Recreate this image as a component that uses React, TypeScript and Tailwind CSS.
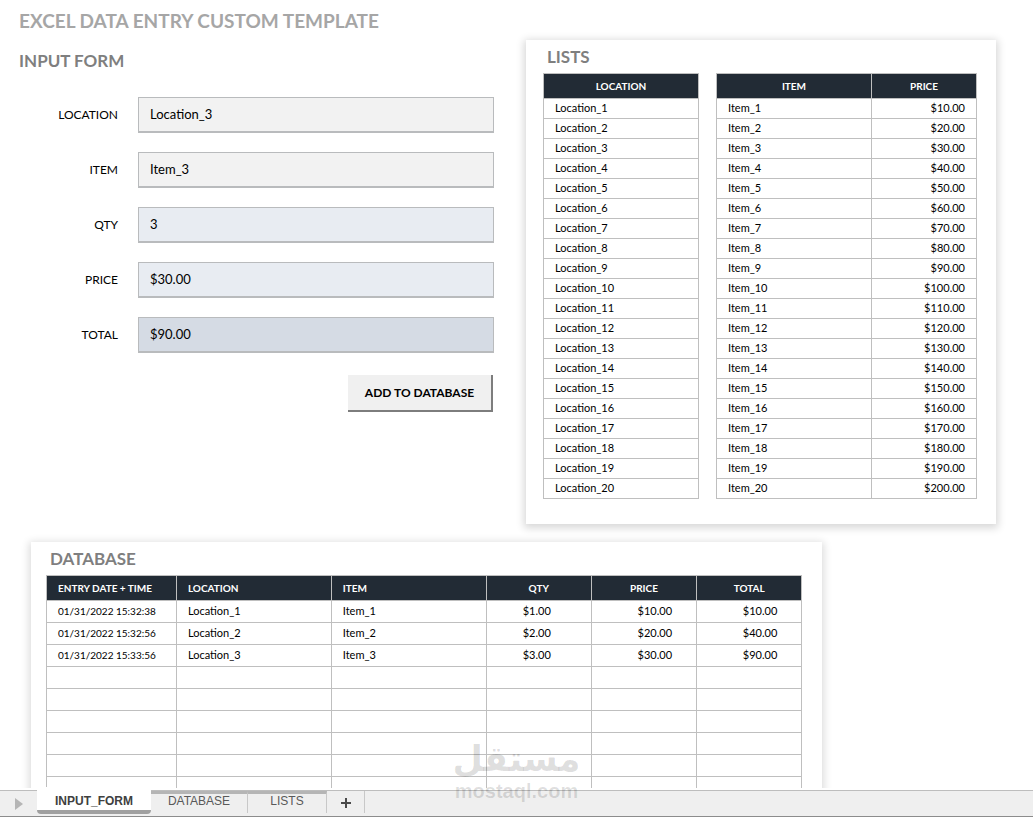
import { useState } from "react";
import clsx from "clsx";

const LIST_SIZE = 20;
const EMPTY_ROWS = 8;

const formatPrice = (value: number) => `$${value.toFixed(2)}`;

const locations = Array.from(
  { length: LIST_SIZE },
  (_, i) => `Location_${i + 1}`
);

const items = Array.from({ length: LIST_SIZE }, (_, i) => ({
  name: `Item_${i + 1}`,
  price: (i + 1) * 10,
}));

const initialEntries = [
  { date: "01/31/2022 15:32:38", location: "Location_1", item: "Item_1", qty: 1, price: 10 },
  { date: "01/31/2022 15:32:56", location: "Location_2", item: "Item_2", qty: 2, price: 20 },
  { date: "01/31/2022 15:33:56", location: "Location_3", item: "Item_3", qty: 3, price: 30 },
];

const sheets = ["INPUT_FORM", "DATABASE", "LISTS"];

interface FieldProps {
  id: string;
  label: string;
  value: string;
  className: string;
  onChange?: (value: string) => void;
}

function Field({ id, label, value, className, onChange }: FieldProps) {
  return (
    <div className="flex items-center gap-5">
      <label htmlFor={id} className="w-[99px] shrink-0 text-right text-[12px]">
        {label}
      </label>
      <input
        id={id}
        type="text"
        value={value}
        readOnly={!onChange}
        onChange={(event) => onChange?.(event.target.value)}
        className={clsx(
          "h-9 min-w-0 flex-1 border border-b-2 border-[#b9bbbd] px-[11px] pb-0.5 text-[13px] outline-none",
          className
        )}
      />
    </div>
  );
}

function InputForm() {
  const [location, setLocation] = useState("Location_3");
  const [item, setItem] = useState("Item_3");
  const [qty, setQty] = useState("3");

  const price = items.find((el) => el.name === item)?.price ?? 0;

  return (
    <form onSubmit={(event) => event.preventDefault()}>
      <h1 className="text-[19px] leading-[42px] font-bold whitespace-nowrap text-[#a6a6a6]">
        EXCEL DATA ENTRY CUSTOM TEMPLATE
      </h1>
      <h2 className="text-[17px] leading-[38px] font-bold text-[#7f7f7f]">
        INPUT FORM
      </h2>
      <div className="mt-[17px] flex flex-col gap-[19px]">
        <Field id="location" label="LOCATION" value={location} onChange={setLocation} className="bg-[#f2f2f2]" />
        <Field id="item" label="ITEM" value={item} onChange={setItem} className="bg-[#f2f2f2]" />
        <Field id="qty" label="QTY" value={qty} onChange={setQty} className="bg-[#e8ecf2]" />
        <Field id="price" label="PRICE" value={formatPrice(price)} className="bg-[#e8ecf2]" />
        <Field id="total" label="TOTAL" value={formatPrice(price * Number(qty))} className="bg-[#d5dbe4]" />
      </div>
      <div className="mt-[22px] flex justify-end pr-px">
        <button
          type="submit"
          className="h-[37px] w-[145px] border-r-2 border-b-2 border-[#7d7d7d] bg-[#f0f0f0] text-[12px] font-bold whitespace-nowrap"
        >
          ADD TO DATABASE
        </button>
      </div>
    </form>
  );
}

const headCell = "border border-[#bfbfbf] px-[11px] py-0";
const cell = "border border-[#bfbfbf] px-[11px] pt-0 pb-0.5";

function Lists() {
  return (
    <section className="bg-white pr-[19px] pb-[25px] pl-[17px] shadow-[0_2px_8px_2px_rgba(0,0,0,0.16)]">
      <h2 className="pl-1 text-[17px] leading-[33px] font-bold text-[#7f7f7f]">
        LISTS
      </h2>
      <div className="grid grid-cols-[156fr_261fr] gap-[17px] text-[11px] leading-[17px]">
        <table className="w-full table-fixed border-collapse">
          <thead>
            <tr className="h-[25px] bg-[#222b35] text-[10px] text-white">
              <th className={headCell}>LOCATION</th>
            </tr>
          </thead>
          <tbody>
            {locations.map((name) => (
              <tr key={name} className="h-5">
                <td className={cell}>{name}</td>
              </tr>
            ))}
          </tbody>
        </table>
        <table className="w-full table-fixed border-collapse">
          <colgroup>
            <col className="w-[155px]" />
            <col />
          </colgroup>
          <thead>
            <tr className="h-[25px] bg-[#222b35] text-[10px] text-white">
              <th className={headCell}>ITEM</th>
              <th className={headCell}>PRICE</th>
            </tr>
          </thead>
          <tbody>
            {items.map((el) => (
              <tr key={el.name} className="h-5">
                <td className={cell}>{el.name}</td>
                <td className={clsx(cell, "text-right")}>
                  {formatPrice(el.price)}
                </td>
              </tr>
            ))}
          </tbody>
        </table>
      </div>
    </section>
  );
}

function Database() {
  return (
    <section className="mt-[18px] ml-3 w-[81%] bg-white pr-5 pb-6 pl-[15px] shadow-[0_2px_8px_2px_rgba(0,0,0,0.14)]">
      <h2 className="pl-1 text-[17px] leading-[33px] font-bold text-[#7f7f7f]">
        DATABASE
      </h2>
      <table className="w-full table-fixed border-collapse text-[11px] leading-[19px]">
        <colgroup>
          <col className="w-[17.2%]" />
          <col className="w-[20.5%]" />
          <col className="w-[20.5%]" />
          <col />
          <col />
          <col />
        </colgroup>
        <thead>
          <tr className="h-[25px] bg-[#222b35] text-left text-[10px] whitespace-nowrap text-white">
            <th className={headCell}>ENTRY DATE + TIME</th>
            <th className={headCell}>LOCATION</th>
            <th className={headCell}>ITEM</th>
            <th className={clsx(headCell, "text-center")}>QTY</th>
            <th className={clsx(headCell, "text-center")}>PRICE</th>
            <th className={clsx(headCell, "text-center")}>TOTAL</th>
          </tr>
        </thead>
        <tbody>
          {initialEntries.map((entry) => (
            <tr key={entry.date} className="h-[22px] whitespace-nowrap">
              <td className={clsx(headCell, "text-[10px]")}>{entry.date}</td>
              <td className={cell}>{entry.location}</td>
              <td className={cell}>{entry.item}</td>
              <td className="border border-[#bfbfbf] pr-10 pb-0.5 text-right">
                {formatPrice(entry.qty)}
              </td>
              <td className="border border-[#bfbfbf] pr-6 pb-0.5 text-right">
                {formatPrice(entry.price)}
              </td>
              <td className="border border-[#bfbfbf] pr-6 pb-0.5 text-right">
                {formatPrice(entry.qty * entry.price)}
              </td>
            </tr>
          ))}
          {Array.from({ length: EMPTY_ROWS }, (_, i) => (
            <tr key={i} className="h-[22px]">
              {Array.from({ length: 6 }, (_, j) => (
                <td key={j} className={cell} />
              ))}
            </tr>
          ))}
        </tbody>
      </table>
    </section>
  );
}

function SheetTabs() {
  const [active, setActive] = useState("INPUT_FORM");

  return (
    <nav className="flex h-[27px] shrink-0 items-start border-t border-b border-t-[#bdbdbd] border-b-[#8c8c8c] bg-[#efefef] font-['Liberation_Sans',Arial,sans-serif] text-[12px] text-[#595959]">
      <button type="button" aria-label="Next sheet" className="flex h-full w-[37px] items-center justify-center">
        <svg viewBox="0 0 8 12" className="h-3 w-2" fill="#b5b5b5">
          <path d="M0 0 8 6 0 12Z" />
        </svg>
      </button>
      {sheets.map((sheet) => (
        <button
          key={sheet}
          type="button"
          onClick={() => setActive(sheet)}
          className={
            sheet === active
              ? "-mt-1 h-[27px] w-[114px] rounded-b-sm border-b-4 border-[#a0a0a0] bg-white pt-1 font-bold text-[#404040]"
              : clsx(
                  "h-[22px] border-t-3 border-r border-t-[#b5b5b5] border-r-[#c8c8c8] pb-1.5 leading-[14px]",
                  sheet === "LISTS" ? "w-[79px]" : "w-[97px]"
                )
          }
        >
          {sheet}
        </button>
      ))}
      <button type="button" aria-label="Add sheet" className="flex h-[22px] w-[38px] items-center justify-center border-r border-[#c8c8c8]">
        <svg viewBox="0 0 10 10" className="mt-0.5 size-[10px]" stroke="#4a4a4a" strokeWidth="2">
          <path d="M5 0v10M0 5h10" />
        </svg>
      </button>
    </nav>
  );
}

function Watermark() {
  return (
    <div className="pointer-events-none absolute inset-x-0 bottom-[14px] flex flex-col items-center font-bold text-black/13">
      <span lang="ar" dir="rtl" className="font-['DejaVu_Sans',sans-serif] text-[35px] leading-10">
        مستقل
      </span>
      <span className="font-['Liberation_Sans',Arial,sans-serif] text-[20px] leading-6">
        mostaql.com
      </span>
    </div>
  );
}

export default function App() {
  return (
    <div className="relative flex h-screen flex-col overflow-hidden bg-white font-['Century_Gothic',Lato,sans-serif] text-black">
      <main className="min-h-0 flex-1 overflow-hidden border-b-2 border-white pr-[37px] pl-[19px]">
        <div className="grid grid-cols-[475fr_470fr] gap-8">
          <InputForm />
          <div className="pt-10">
            <Lists />
          </div>
        </div>
        <Database />
      </main>
      <SheetTabs />
      <Watermark />
    </div>
  );
}
